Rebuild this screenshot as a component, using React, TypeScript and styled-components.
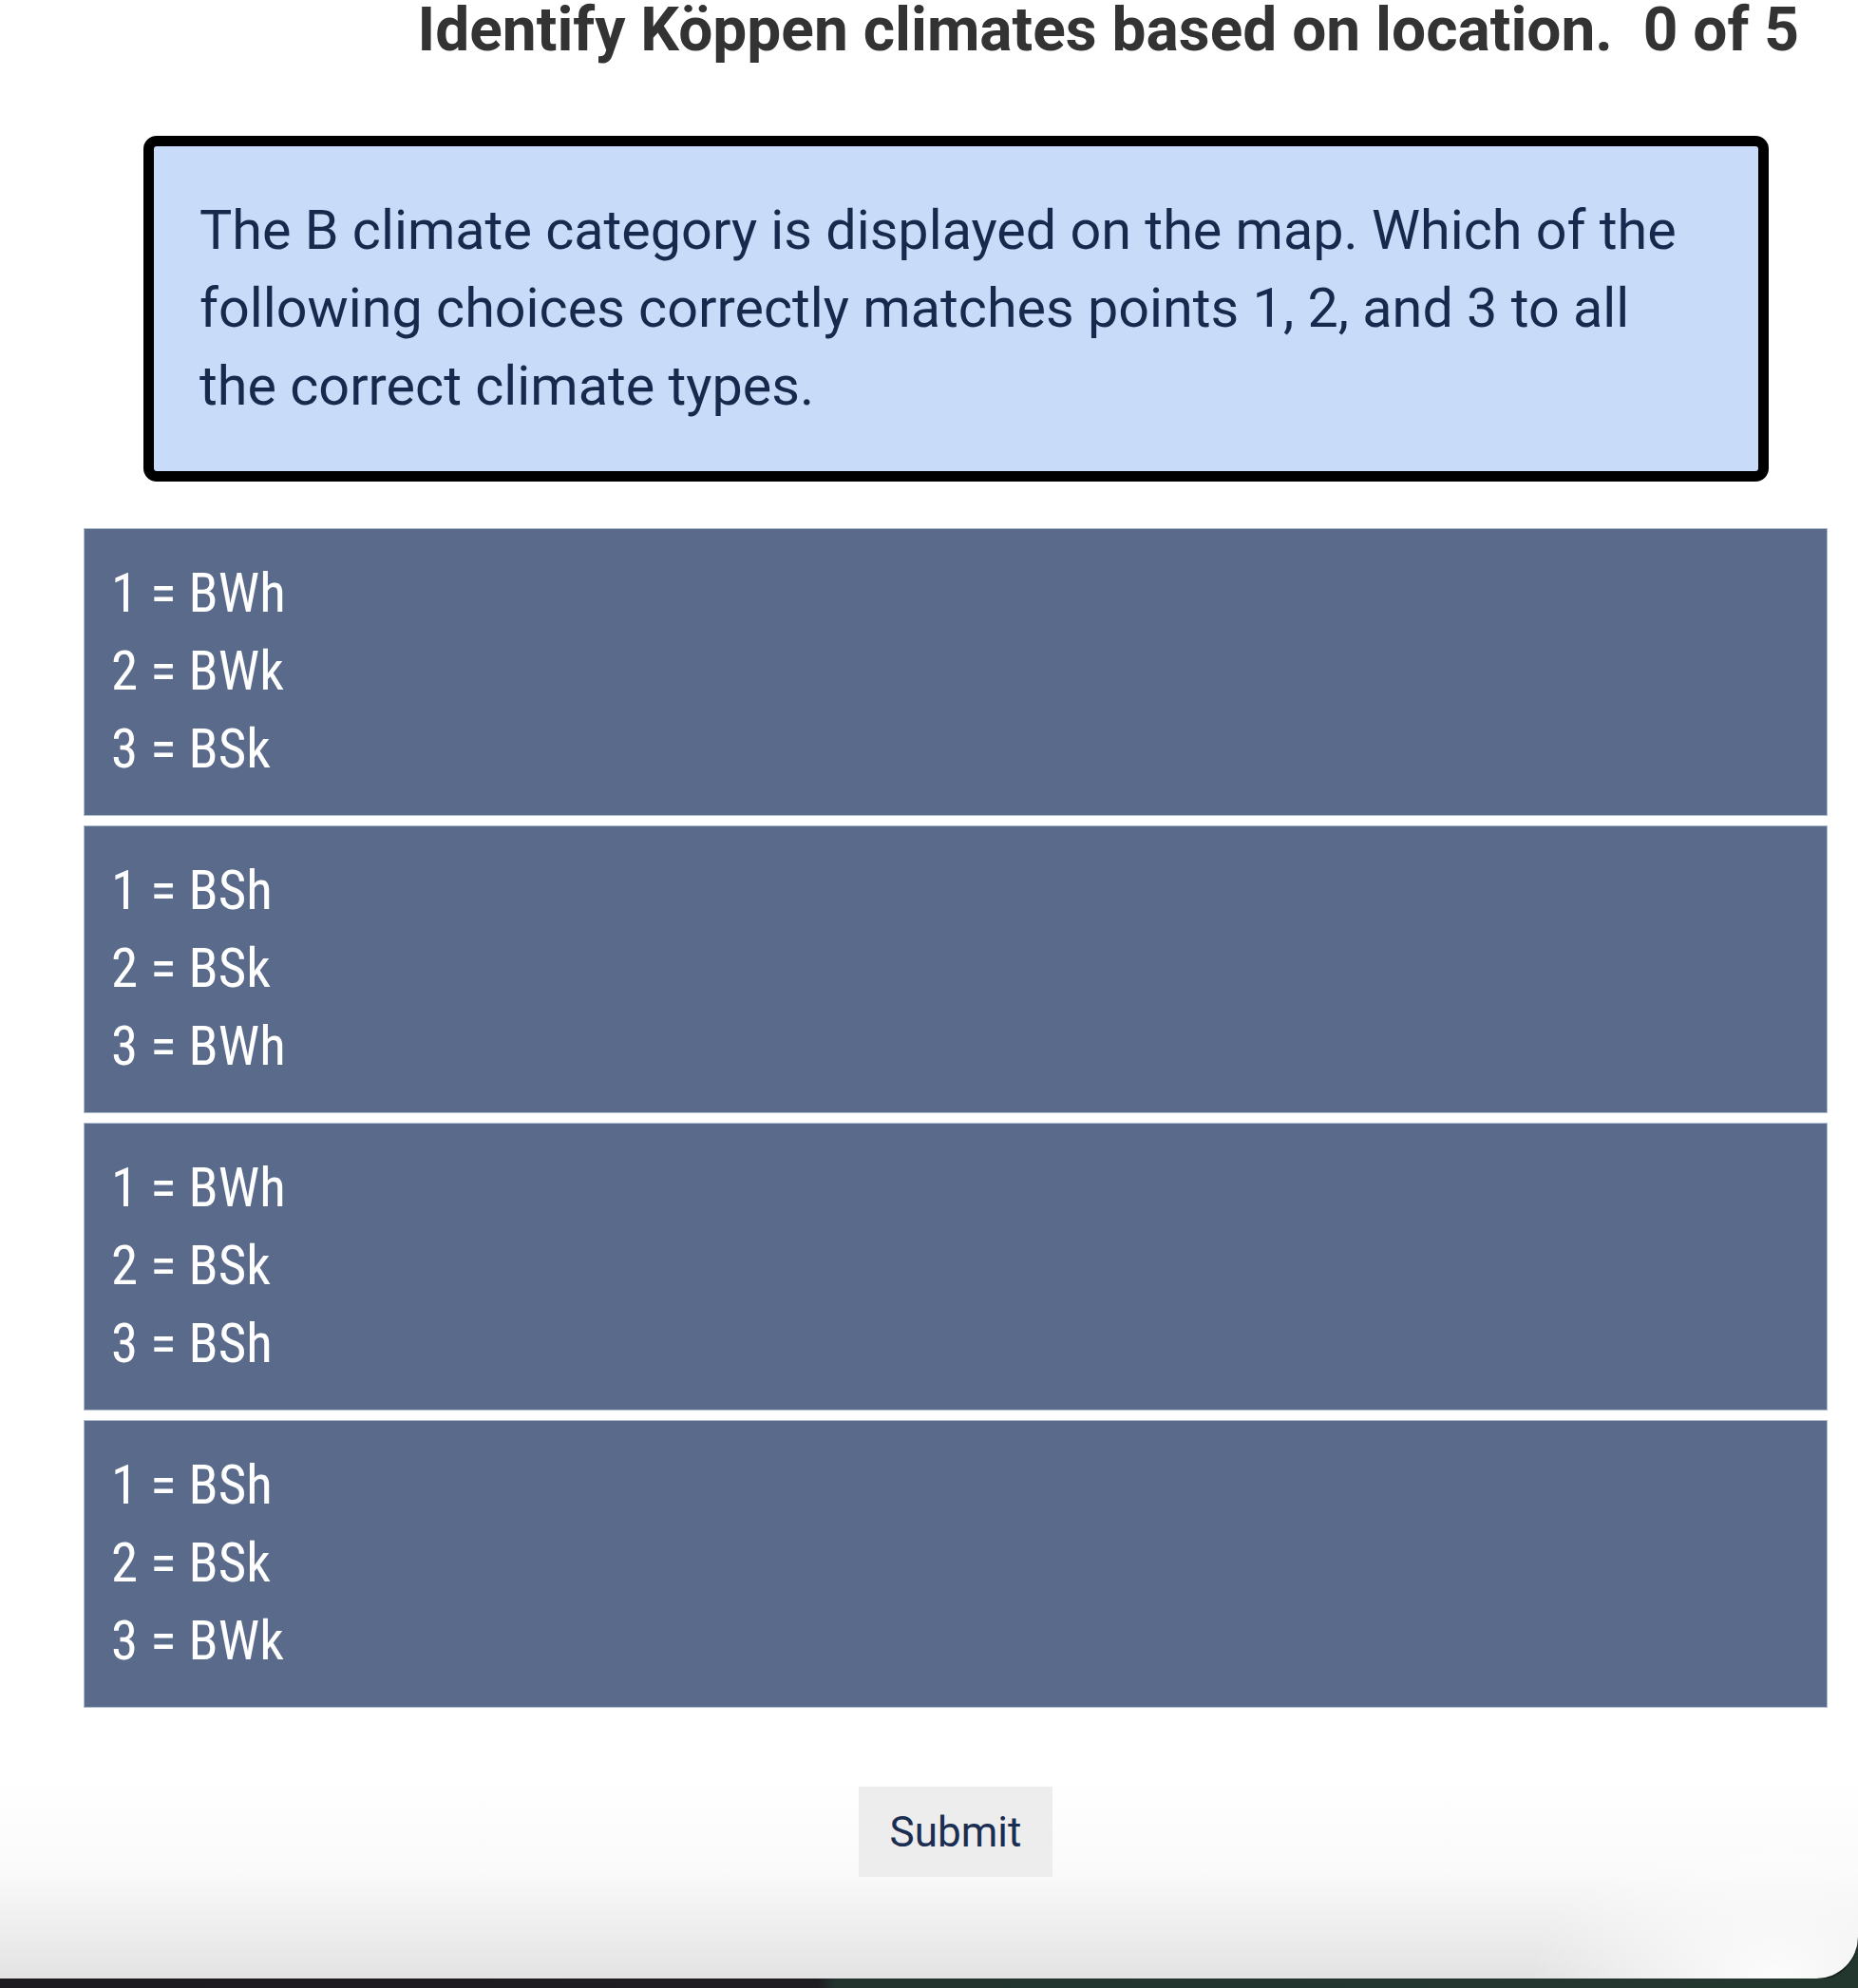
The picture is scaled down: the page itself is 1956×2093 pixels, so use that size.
import React from "react";
import styled, { createGlobalStyle } from "styled-components";

const GlobalStyle = createGlobalStyle`
  html, body {
    margin: 0;
    padding: 0;
  }
  body {
    background: linear-gradient(to right, #1d1a20 0%, #1f1d22 44%, #23342f 45%, #24372f 100%);
    font-family: Roboto, "Noto Sans", sans-serif;
  }
  * {
    box-sizing: border-box;
  }
`;

const Panel = styled.div`
  position: relative;
  width: 100%;
  height: 2083px;
  border-bottom-right-radius: 44px;
  overflow: hidden;
  background:
    radial-gradient(ellipse 260px 160px at 1870px 2083px, rgba(255, 255, 255, 0.9), rgba(255, 255, 255, 0)),
    linear-gradient(to bottom, #ffffff 0px, #ffffff 1870px, #fafafa 1970px, #e3e3e3 2083px);
  box-shadow: 0 1px 2px rgba(0, 0, 0, 0.9);
  display: flex;
  flex-direction: column;
`;

const Title = styled.h1`
  margin: 0;
  padding-right: 62px;
  text-align: right;
  font-family: Roboto, "Noto Sans", sans-serif;
  font-weight: 700;
  font-size: 64px;
  line-height: 64px;
  color: #333333;
  white-space: pre;
`;

const Content = styled.div`
  padding: 0 32px 0 88px;
  display: flex;
  flex-direction: column;
`;

const QuestionBox = styled.div`
  margin: 79px 62px 0 63px;
  border: 11px solid #000;
  border-radius: 14px;
  background: #c8dbf8;
  padding: 48px;
  font-family: Roboto, "Noto Sans", sans-serif;
  font-size: 57.5px;
  line-height: 82px;
  color: #172a4d;
`;

const ChoiceList = styled.ul`
  list-style: none;
  margin: 49px 0 0;
  padding: 0;
  display: flex;
  flex-direction: column;
  gap: 10px;
`;

const Choice = styled.li`
  border: 1px solid #aebacd;
  background: #5a6a8a;
  padding: 27px 28px 28px;
  cursor: pointer;
`;

const ChoiceLine = styled.div`
  font-family: "Roboto Condensed", Roboto, sans-serif;
  font-stretch: condensed;
  font-size: 57px;
  line-height: 82px;
  color: #ffffff;
`;

const Actions = styled.div`
  display: flex;
  justify-content: center;
  margin-top: 83px;
`;

const SubmitButton = styled.button`
  width: 204px;
  height: 95px;
  border: none;
  border-radius: 0;
  background: #ededed;
  font-family: Roboto, "Noto Sans", sans-serif;
  font-size: 44px;
  color: #1b2d50;
  padding: 0;
  cursor: pointer;
`;

const choices: string[][] = [
  ["1 = BWh", "2 = BWk", "3 = BSk"],
  ["1 = BSh", "2 = BSk", "3 = BWh"],
  ["1 = BWh", "2 = BSk", "3 = BSh"],
  ["1 = BSh", "2 = BSk", "3 = BWk"],
];

export default function App() {
  return (
    <>
      <GlobalStyle />
      <Panel>
        <Title>{"Identify Köppen climates based on location.  0 of 5"}</Title>
        <Content>
          <QuestionBox>
            The B climate category is displayed on the map. Which of the following choices
            correctly matches points 1, 2, and 3 to all the correct climate types.
          </QuestionBox>
          <ChoiceList>
            {choices.map((lines, i) => (
              <Choice key={i}>
                {lines.map((line) => (
                  <ChoiceLine key={line}>{line}</ChoiceLine>
                ))}
              </Choice>
            ))}
          </ChoiceList>
          <Actions>
            <SubmitButton type="button">Submit</SubmitButton>
          </Actions>
        </Content>
      </Panel>
    </>
  );
}
